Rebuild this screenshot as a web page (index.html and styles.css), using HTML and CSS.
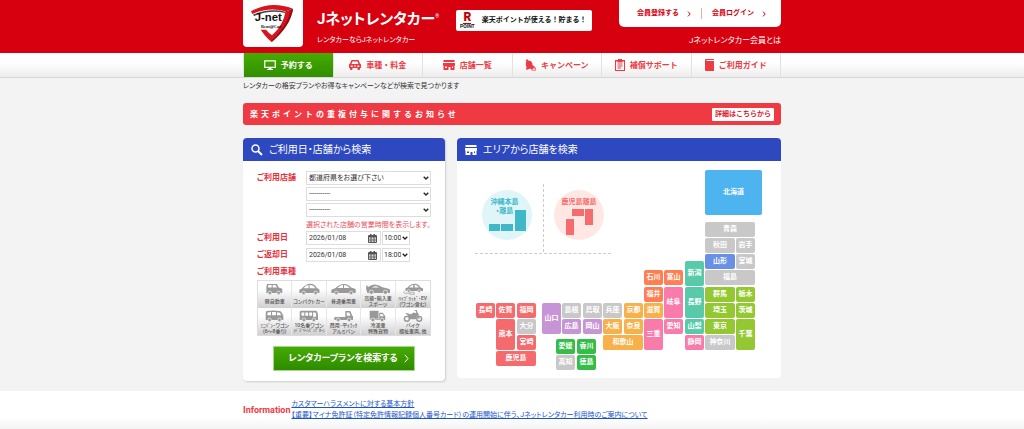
FILE: index.html
```html
<!DOCTYPE html>
<html lang="ja">
<head>
<meta charset="utf-8">
<meta name="viewport" content="width=device-width, initial-scale=1">
<title>Jネットレンタカー</title>
<link rel="stylesheet" href="styles.css">
</head>
<body>
<header class="header">
  <div class="wrap header-row">
    <a class="logo" href="#" aria-label="J-net Rent@Car">
      <svg viewBox="22 0 180 141" width="60" height="47">
        <path d="M46 34Q105 0 172 26L150 34Q100 20 50 42Z" fill="#d9141e"/>
        <path d="M52 44Q100 23 150 35L149 39Q102 28 55 48Z" fill="#444"/>
        <path d="M172 27Q164 76 108 126Q88 110 75 89L91 89Q99 99 109 106Q143 76 150 33Z" fill="#d9141e"/>
        <path d="M172 27Q165 78 108 126L108 121Q154 80 166 28Z" fill="#8d1018"/>
        <text x="57" y="62" class="logo-name">J-net</text>
        <text x="76" y="83" class="logo-sub">Rent@Car</text>
      </svg>
    </a>
    <div class="brand">
      <h1 class="brand-name">Jネットレンタカー<sup>®</sup></h1>
      <p class="brand-copy">レンタカーならJネットレンタカー</p>
    </div>
    <a class="point" href="#">
      <span class="point-mark"><b>R</b><small>POINT</small></span>
      <span>楽天ポイントが使える！貯まる！</span>
    </a>
    <div class="member">
      <div class="member-box">
        <a href="#">会員登録する<svg viewBox="0 0 4 6" width="4" height="6"><path d="M1 .6 3.2 3 1 5.4"/></svg></a>
        <a href="#">会員ログイン<svg viewBox="0 0 4 6" width="4" height="6"><path d="M1 .6 3.2 3 1 5.4"/></svg></a>
      </div>
      <a class="member-about" href="#">Jネットレンタカー会員とは</a>
    </div>
  </div>
</header>

<nav class="nav">
  <div class="wrap nav-row">
    <a class="nav-item nav-active" href="#">
      <svg viewBox="0 0 24 20" width="12" height="10"><path d="M1.5 1.500h21v13h-21z" fill="none" stroke="currentColor" stroke-width="2.500"/><path d="M9 15h6v3h3v2H6v-2h3z"/></svg>予約する</a>
    <a class="nav-item" href="#">
      <svg viewBox="0 0 24 20" width="12" height="10"><path fill-rule="evenodd" d="M5 0h14l3 7 2 2v7h-2v3q-3 2-5 0v-3H7v3q-3 2-5 0v-3H0V9l2-2zM7 3 5 8h14l-2-5zM3.500 11v3h4v-3zm13 0v3h4v-3zM10 11v2h4v-2z"/></svg>車種・料金</a>
    <a class="nav-item" href="#">
      <svg viewBox="0 0 24 20" width="12" height="10"><path fill-rule="evenodd" d="M1 0h22v4H1zM0 6h24v5h-1v9h-8v-6h-4v6H1v-9H0zM4 13v3h4v-3zm14 0v3h2v-3z"/></svg>店舗一覧</a>
    <a class="nav-item" href="#">
      <svg viewBox="0 0 22 24" width="11" height="12"><path d="M1 3 5 0l1 3q9 0 9 9l5 4-4 1q2 3-1 4-3 1-4-2L2 22l1-6Q0 9 3 5zM16 14l6 4v2l-5-2zM13 22l9-1v2h-8z"/></svg>キャンペーン</a>
    <a class="nav-item" href="#">
      <svg viewBox="0 0 20 24" width="10" height="12"><path fill-rule="evenodd" d="M0 2h6V0h8v2h6v22H0zM2 5v17h16V5h-3v2H5V5z"/><path d="M5 9h10v2H5zM5 13h10v2H5zM5 17h7v2H5z"/></svg>補償サポート</a>
    <a class="nav-item" href="#">
      <svg viewBox="0 0 18 24" width="9" height="12"><path d="M2 0h16v2H3v2h15v20H2q-2 0-2-2V2q0-2 2-2z"/></svg>ご利用ガイド</a>
  </div>
</nav>

<main class="wrap">
  <p class="lead">レンタカーの格安プランやお得なキャンペーンなどが検索で見つかります</p>

  <div class="notice">
    <strong class="notice-text">楽天ポイントの重複付与に関するお知らせ</strong>
    <a class="notice-more" href="#">詳細はこちらから</a>
  </div>

  <div class="panels">
    <section class="panel panel-form">
      <h2 class="panel-title">
        <svg viewBox="0 0 24 24" width="12" height="12"><circle cx="9" cy="9" r="7" fill="none" stroke="currentColor" stroke-width="3"/><path d="m14 14 8 8" fill="none" stroke="currentColor" stroke-width="4"/></svg>
        ご利用日・店舗から検索</h2>
      <form class="form">
        <div class="row">
          <label class="label" for="pref">ご利用店舗</label>
          <div class="stack">
            <select id="pref" class="field"><option>都道府県をお選び下さい</option></select>
            <select class="field" aria-label="エリア"><option>-----------</option></select>
            <select class="field" aria-label="店舗"><option>-----------</option></select>
          </div>
        </div>
        <p class="hint">選択された店舗の営業時間を表示します。</p>
        <div class="row">
          <label class="label" for="from">ご利用日</label>
          <div class="when">
            <span class="date"><input id="from" type="text" value="2026/01/08"><svg viewBox="0 0 18 18" width="9" height="9"><use href="#cal"/></svg></span>
            <select class="field time" aria-label="ご利用時刻"><option>10:00</option></select>
          </div>
        </div>
        <div class="row">
          <label class="label" for="to">ご返却日</label>
          <div class="when">
            <span class="date"><input id="to" type="text" value="2026/01/08"><svg viewBox="0 0 18 18" width="9" height="9"><use href="#cal"/></svg></span>
            <select class="field time" aria-label="ご返却時刻"><option>18:00</option></select>
          </div>
        </div>
        <p class="label">ご利用車種</p>
        <div class="cars">
          <button type="button" class="car"><svg viewBox="0 0 48 34"><path fill-rule="evenodd" d="M3 3h28l5 10 10 3v12H1V12zM7 6l-2 7h11V6zm12 0v7h12l-4-7z"/><g class="wheel"><circle cx="11" cy="28" r="5"/><circle cx="36" cy="28" r="5"/></g></svg><span>軽自動車</span></button>
          <button type="button" class="car"><svg viewBox="0 0 60 34"><path fill-rule="evenodd" d="M1 28V19l8-4Q19 2 32 2q12 0 19 12l7 5v9zM13 15h14V6q-8 0-14 9zm17 0h17Q41 6 30 6z"/><g class="wheel"><circle cx="13" cy="28" r="5"/><circle cx="47" cy="28" r="5"/></g></svg><span>コンパクトカー</span></button>
          <button type="button" class="car"><svg viewBox="0 0 72 34"><path fill-rule="evenodd" d="M1 28v-9l12-5Q24 3 38 3q11 0 19 10l13 4v11zM18 14h16V6q-9 0-16 8zm19 0h16q-6-8-16-8z"/><g class="wheel"><circle cx="15" cy="28" r="5"/><circle cx="57" cy="28" r="5"/></g></svg><span>普通乗用車</span></button>
          <button type="button" class="car"><svg viewBox="0 0 70 34"><path fill-rule="evenodd" d="M0 16 1 7l4 1v4q13-10 24-7 8 1 17 7 16 2 23 7v9H4zM17 13h20q-9-8-20 0z"/><g class="wheel"><circle cx="15" cy="26" r="6"/><circle cx="55" cy="26" r="6"/></g></svg><span>高級・輸入車<br>スポーツ</span></button>
          <button type="button" class="car"><svg viewBox="0 0 58 34"><path fill-rule="evenodd" d="M7 23v-8l6-2Q20 2 34 2q10 0 15 10l8 4v7zM17 13h12V5q-7 1-12 8zm16 0h12q-4-8-12-8z"/><path d="M20 29H4q-5-2 1-6M20 26h12v6H20z" fill="none" stroke="currentColor" stroke-width="2"/><g class="wheel"><circle cx="16" cy="23" r="4"/><circle cx="46" cy="23" r="4"/></g></svg><span>ﾊｲﾌﾞﾘｯﾄﾞ･EV<br>(ワゴン含む)</span></button>
          <button type="button" class="car"><svg viewBox="0 0 54 34"><path fill-rule="evenodd" d="M4 3q20-3 38 0 4 0 10 14v11H2V8zM7 7v8h10V6zm13-1v9h11V6zm14 1v8h12q-3-7-5-8z"/><g class="wheel"><circle cx="13" cy="28" r="5"/><circle cx="41" cy="28" r="5"/></g></svg><span>ﾐﾆﾊﾞﾝ･ワゴン<br>(6～8乗り)</span></button>
          <button type="button" class="car"><svg viewBox="0 0 56 34"><path fill-rule="evenodd" d="M5 2h44q4 2 5 12v14H2V5zM7 7v9h8V7zm11 0v9h8V7zm11 0v9h8V7zm11 0v12h9q0-8-2-12z"/><g class="wheel"><circle cx="14" cy="28" r="5"/><circle cx="42" cy="28" r="5"/></g></svg><span>10名乗ワゴン<br><small>(ﾊﾞｽ･ｷｬﾝﾋﾟﾝｸﾞｶｰ)</small></span></button>
          <button type="button" class="car"><svg viewBox="0 0 56 34"><path fill-rule="evenodd" d="M32 3h14l6 13 2 2v10H1v-8h31zM36 7v9h11l-4-9z"/><g class="wheel"><circle cx="12" cy="28" r="5"/><circle cx="43" cy="28" r="5"/></g></svg><span>商用･平ﾄﾗｯｸ<br>アルミバン</span></button>
          <button type="button" class="car"><svg viewBox="0 0 48 34"><path fill-rule="evenodd" d="M2 2h25v23H2zM29 8h10l7 10v10H2v-2h27zM32 11v7h10l-4-7z"/><g class="wheel"><circle cx="11" cy="28" r="5"/><circle cx="37" cy="28" r="5"/></g></svg><span>冷凍車<br>特殊貨物</span></button>
          <button type="button" class="car"><svg viewBox="0 0 56 34"><path d="m6 8 17 4 7-5 8 2-2-7h-4V0h7l3 9 4 3-4 2-6 12H20l-6-10z"/><g fill="none" stroke="currentColor" stroke-width="4"><circle cx="11" cy="25" r="7"/><circle cx="46" cy="25" r="7"/><path d="m39 8 7 17"/></g></svg><span>バイク<br>福祉車両､他</span></button>
        </div>
        <button type="submit" class="submit">レンタカープランを検索する<svg viewBox="0 0 5 9" width="5" height="9"><path d="M.8.8 4 4.500.8 8.200"/></svg></button>
      </form>
    </section>

    <section class="panel panel-area">
      <h2 class="panel-title">
        <svg viewBox="0 0 24 20" width="12" height="10"><path fill-rule="evenodd" d="M1 0h22v4H1zM0 6h24v5h-1v9h-8v-6h-4v6H1v-9H0zM4 13v3h4v-3zm14 0v3h2v-3z"/></svg>
        エリアから店舗を検索</h2>
      <div class="map">
        <span class="rule rule-v"></span><span class="rule rule-h"></span>
        <a class="isle okinawa" href="#"><span>沖縄本島<br>・離島</span>
          <svg viewBox="0 0 50 50" width="50" height="50"><path d="M7 34h11v7H7zM19 34h12v7H19zM33 20h11v21H33z"/></svg></a>
        <a class="isle kagoshima" href="#"><span>鹿児島離島</span>
          <svg viewBox="0 0 50 50" width="50" height="50"><path d="M18 19h12v7H18zM31 19h8v16h-8zM12 29h8v16h-8z"/></svg></a>

        <a class="tile sky hokkaido c12" href="#">北海道</a>
        <span class="tile off c12 r1 w-tohoku">青森</span>
        <span class="tile off c12 r2 w30">秋田</span><span class="tile off c13 r2">岩手</span>
        <a class="tile blue c12 r3 w30" href="#">山形</a><span class="tile off c13 r3">宮城</span>
        <span class="tile off c12 r4 w-tohoku">福島</span>
        <a class="tile lime c12 r5 w30" href="#">群馬</a><a class="tile lime c13 r5" href="#">栃木</a>
        <a class="tile lime c12 r6 w30" href="#">埼玉</a><a class="tile lime c13 r6" href="#">茨城</a>
        <a class="tile lime c12 r7 w30" href="#">東京</a><a class="tile lime c13 r7 tall" href="#">千葉</a>
        <span class="tile off c12 r8 w30">神奈川</span>

        <a class="tile teal c11 niigata" href="#">新潟</a>
        <a class="tile teal c11 r5 tall" href="#">長野</a>
        <a class="tile teal c11 r7" href="#">山梨</a>
        <a class="tile pink c11 r8" href="#">静岡</a>
        <a class="tile coral c9 r4" href="#">石川</a><a class="tile coral c10 r4" href="#">富山</a>
        <a class="tile coral c9 r5" href="#">福井</a>
        <a class="tile pink c10 r5 tall" href="#">岐阜</a><a class="tile pink c10 r7" href="#">愛知</a>
        <a class="tile pink c9 r7 tall" href="#">三重</a>

        <a class="tile amber c9 r6" href="#">滋賀</a><a class="tile amber c8 r6" href="#">京都</a>
        <span class="tile off c7 r6">兵庫</span>
        <a class="tile amber c7 r7" href="#">大阪</a><a class="tile amber c8 r7" href="#">奈良</a>
        <a class="tile amber c7 r8 w40" href="#">和歌山</a>

        <a class="tile violet c4 r6 tall" href="#">山口</a>
        <span class="tile off c5 r6">島根</span><span class="tile off c6 r6">鳥取</span>
        <a class="tile violet c5 r7" href="#">広島</a><a class="tile violet c6 r7" href="#">岡山</a>

        <a class="tile green s1 t1" href="#">愛媛</a><a class="tile green s2 t1" href="#">香川</a>
        <span class="tile off s1 t2">高知</span><a class="tile green s2 t2" href="#">徳島</a>

        <a class="tile red c1 r6" href="#">長崎</a><a class="tile red c2 r6" href="#">佐賀</a><a class="tile red c3 r6" href="#">福岡</a>
        <a class="tile red c2 r7 tall" href="#">熊本</a><span class="tile off c3 r7">大分</span>
        <a class="tile red c3 r8" href="#">宮崎</a><a class="tile red c2 r9 w40" href="#">鹿児島</a>
      </div>
    </section>
  </div>
</main>

<section class="info">
  <div class="wrap info-row">
    <h2 class="info-title">Information</h2>
    <ul class="info-list">
      <li><a href="#">カスタマーハラスメントに対する基本方針</a></li>
      <li><a href="#">【重要】マイナ免許証（特定免許情報記録個人番号カード）の運用開始に伴う、Jネットレンタカー利用時のご案内について</a></li>
    </ul>
  </div>
</section>

<svg width="0" height="0" class="defs"><symbol id="cal" viewBox="0 0 18 18"><path fill-rule="evenodd" d="M2 2h2V0h3v2h4V0h3v2h2q2 0 2 2v12q0 2-2 2H2q-2 0-2-2V4q0-2 2-2zM2 7v2.500h3V7zm5 0v2.500h4V7zm6 0v2.500h3V7zM2 11v2h3v-2zm5 0v2h4v-2zm6 0v2h3v-2zM2 14.500V16h3v-1.500zm5 0V16h4v-1.500zm6 0V16h3v-1.500z"/></symbol></svg>
</body>
</html>
```
FILE: styles.css
```css
* { box-sizing: border-box; }
body {
  margin: 0;
  background: #f3f3f3;
  color: #333;
  font-family: Roboto, "Noto Sans CJK JP", sans-serif;
  font-size: 7px;
  line-height: 11px;
  font-feature-settings: "palt";
}
h1, h2, p, ul { margin: 0; padding: 0; }
ul { list-style: none; }
a { color: inherit; text-decoration: none; }
svg { display: block; flex: none; fill: currentColor; }
button, input, select { font: inherit; color: inherit; margin: 0; }
.wrap { max-width: 538px; margin: 0 auto; }
.defs { position: absolute; }

/* Header */
.header { background: #d7000f; color: #fff; }
.header-row { display: flex; align-items: flex-start; min-height: 53px; }
.logo { background: #fff; border-radius: 0 0 4px 4px; color: #111; }
.logo-name { font: 700 34px/1 "Liberation Sans", sans-serif; }
.logo-sub { font: 700 13px/1 "Liberation Serif", serif; }
.brand { padding: 9px 0 0 14px; width: 153px; white-space: nowrap; }
.brand-name { font-size: 15px; line-height: 20px; font-weight: 700; }
.brand-name sup { font-size: 5px; line-height: 5px; font-weight: 400; vertical-align: 6px; }
.brand-copy { margin-top: 6px; }
.point {
  display: flex; align-items: center; gap: 7px;
  margin-top: 10px; padding: 0 6px 0 4px; height: 21px;
  background: #fff; border-radius: 2px; color: #111;
  font-weight: 700; white-space: nowrap;
  font-feature-settings: normal;
}
.point-mark { display: flex; flex-direction: column; align-items: center; }
.point-mark b { color: #bf0000; font-size: 12px; line-height: 11px; border-bottom: 1px solid #bf0000; }
.point-mark small { font-size: 5px; line-height: 5px; }
.member { margin-left: auto; text-align: right; }
.member-box {
  display: flex; height: 27px; align-items: center;
  padding: 0 15px 0 18px;
  background: #fff; color: #d7000f;
  border-radius: 0 0 5px 5px; font-weight: 700;
  font-feature-settings: normal;
}
.member-box a { display: flex; align-items: center; gap: 8px; }
.member-box a + a { margin-left: 10px; padding-left: 10px; border-left: 1px solid #eaa; }
.member-box svg, .submit svg { fill: none; stroke: currentColor; stroke-width: 1; }
.member-about { display: block; margin-top: 8px; font-size: 8px; }

/* Navigation */
.nav { background: linear-gradient(#fff 40%, #ededed); border-bottom: 1px solid #d8d8d8; }
.nav-row { display: flex; border-left: 1px solid #e2e2e2; }
.nav-item {
  flex: 1; display: flex; align-items: center; justify-content: center; gap: 5px;
  height: 24px; border-right: 1px solid #e2e2e2;
  color: #ee3a43; font-size: 8px; font-weight: 700; white-space: nowrap;
  font-feature-settings: normal;
}
.nav-active { background: linear-gradient(#48ab00, #2f8f00); color: #fff; }

.lead { padding: 3px 0 0; margin: 0 0 11px; }
.notice {
  display: flex; align-items: center; justify-content: space-between;
  height: 22px; padding: 0 7px; border-radius: 3px;
  background: #f03a43; color: #fff;
}
.notice-text { font-size: 8px; letter-spacing: 3px; font-feature-settings: normal; }
.notice-more {
  padding: 1px 3px; border-radius: 1px; background: #fff; color: #e0202b;
  font-weight: 700; font-feature-settings: normal;
}

/* Panels */
.panels { display: flex; align-items: flex-start; gap: 12px; margin: 13px 0 10px; }
.panel { background: #fff; border-radius: 4px; }
.panel-form { flex: 202; box-shadow: 1px 1px 2px #ccc; }
.panel-area { flex: 324; }
.panel-title {
  display: flex; align-items: center; gap: 6px;
  height: 23px; padding: 0 8px; border-radius: 4px 4px 0 0;
  background: #2e48bf; color: #fff; font-size: 10px; font-weight: 400;
}
.form { display: flex; flex-direction: column; padding: 10px 14px; }
.row { display: flex; align-items: flex-start; margin-bottom: 3px; }
.label { width: 49px; color: #e8303a; font-weight: 700; font-size: 8px; line-height: 13px; }
.stack { flex: 1; display: grid; gap: 2px; }
.field, .date { height: 14px; border: 1px solid #ddd; border-radius: 0; background: #fff; }
.field {
  width: 100%; padding: 0 10px 0 2px; appearance: none;
  background: #fff url("data:image/svg+xml,%3Csvg xmlns='http://www.w3.org/2000/svg' viewBox='0 0 6 4'%3E%3Cpath d='M.7.7 3 3 5.3.7' fill='none' stroke='%23222' stroke-width='1.3'/%3E%3C/svg%3E") right 1px center / 6px 4px no-repeat;
}
.hint { margin: 1px 0 0 49px; color: #e8505a; line-height: 9px; white-space: nowrap; }
.hint + .row { margin-top: 1px; }
.when { display: flex; gap: 1px; }
.date { display: flex; align-items: center; width: 75px; padding: 0 3px 0 2px; color: #555; }
.date input { flex: 1; min-width: 0; padding: 0; border: 0; background: none; color: #333; }
.time { width: 28px; padding: 0 8px 0 1px; }
.cars {
  display: grid; grid-template-columns: repeat(5, 1fr); margin: 2px 0 10px;
  border: 1px solid #ddd;
}
.car {
  display: flex; flex-direction: column; align-items: center;
  height: 27px; padding: 2px 0 1px; min-width: 0;
  border: 0; border-right: 1px solid #e6e6e6;
  background: linear-gradient(#fff 30%, #d0d0d0);
  color: #555; font-size: 5px; line-height: 6px; font-weight: 500; white-space: nowrap;
}
.car:nth-child(5n) { border-right: 0; }
.car svg { height: 12px; color: #999; }
.car span { margin: auto 0; }
.car small { display: block; font-size: 4px; }
.wheel { stroke: #eee; stroke-width: 2; }
.submit {
  display: flex; align-items: center; justify-content: center; gap: 6px;
  align-self: center; width: 142px; height: 25px; padding: 0 0 0 9px;
  border: 1px solid #a5d98a; background: linear-gradient(#45aa02, #2f8b00);
  color: #fff; font-size: 9px; font-weight: 700; white-space: nowrap;
}

/* Prefecture map */
.map { position: relative; height: 217px; }
.tile, .isle, .rule { position: absolute; }
.rule-v { left: 86px; top: 23px; height: 68px; border-left: 1px dashed #ccc; }
.rule-h { left: 18px; top: 92px; width: 136px; border-top: 1px dashed #ccc; }
.isle {
  top: 29px; width: 50px; height: 50px; border-radius: 50%;
  font-weight: 700; line-height: 9px; text-align: center; white-space: nowrap;
}
.isle span { position: absolute; left: 0; right: 0; top: 8px; }
.okinawa { left: 25px; background: #dff5f8; color: #40b8c8; }
.okinawa span { right: 5px; }
.kagoshima { left: 97px; background: #ffe8e3; color: #f66b6e; }
.tile {
  display: flex; align-items: center; justify-content: center;
  width: 19px; height: 15px; border-radius: 2px;
  color: #fff; font-weight: 700; white-space: nowrap;
}
.tall { height: 31px; }
.w30 { width: 30px; }
.w40 { width: 40px; }
.w-tohoku { width: 50px; }
.hokkaido { top: 9px; width: 57px; height: 45px; }
.niigata { top: 100px; height: 25px; }
.c1 { left: 19px; } .c2 { left: 39px; } .c3 { left: 60px; }
.c4 { left: 85px; } .c5 { left: 105px; } .c6 { left: 126px; }
.c7 { left: 146px; } .c8 { left: 167px; } .c9 { left: 187px; }
.c10 { left: 207px; } .c11 { left: 228px; } .c12 { left: 248px; } .c13 { left: 279px; }
.r1 { top: 61px; } .r2 { top: 77px; } .r3 { top: 93px; }
.r4 { top: 109px; } .r5 { top: 126px; } .r6 { top: 142px; }
.r7 { top: 158px; } .r8 { top: 174px; } .r9 { top: 190px; }
.s1 { left: 99px; } .s2 { left: 120px; }
.t1 { top: 178px; } .t2 { top: 194px; }
.off { background: #c8c8c8; }
.sky { background: #4eb4f0; }
.blue { background: #6890e5; }
.lime { background: #94c832; }
.teal { background: #58c9a9; }
.pink { background: #f87ba9; }
.coral { background: #ff7f55; }
.amber { background: #f7b04a; }
.violet { background: #c795d6; }
.green { background: #35bd48; }
.red { background: #f56a6c; }

/* Information */
.info { background: linear-gradient(#fff 70%, #f3f3f3); }
.info-row { display: flex; align-items: center; gap: 1px; padding: 8px 0; }
.info-title { color: #f03a43; font-size: 9px; font-weight: 700; }
.info-list a { color: #1a55c8; text-decoration: underline; }
```
